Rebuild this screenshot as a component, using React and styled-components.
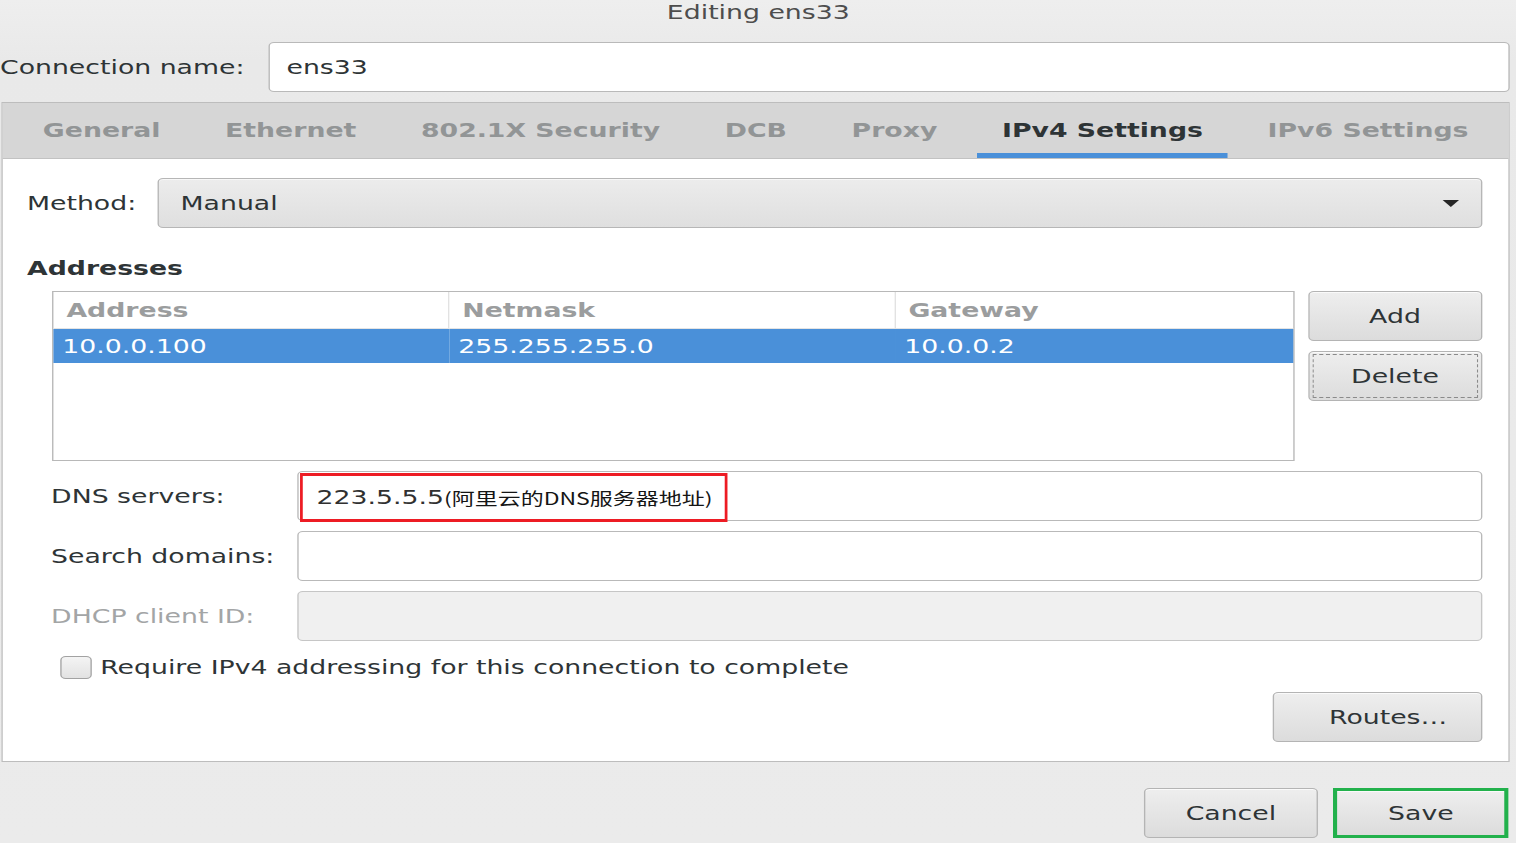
import React from 'react'
import styled, { createGlobalStyle } from 'styled-components'

// the shot is a GTK dialog stretched sideways, so everything is laid out
// in its own width and then widened as a whole
const STRETCH = 1.37
const WIDTH = 1107

const GlobalStyle = createGlobalStyle`
  html, body {
    margin: 0;
    padding: 0;
    width: 1516px;
    height: 843px;
    overflow: hidden;
    background: #ebebeb;
  }
`

const Dialog = styled.div`
  width: ${WIDTH}px;
  height: 843px;
  transform: scaleX(${STRETCH});
  transform-origin: 0 0;
  display: flex;
  flex-direction: column;
  background: linear-gradient(#eeeeee, #e9e9e9 60px, #ebebeb);
  font-family: "DejaVu Sans", "Noto Sans", sans-serif;
  font-size: 19.5px;
  color: #2e3436;
`

const TitleBar = styled.div`
  height: 42px;
  line-height: 26px;
  text-align: center;
  color: #4d4d4d;
`

const NameRow = styled.div`
  display: flex;
  align-items: center;
  height: 50px;
  margin: 0 5.5px 0 0;
`

const NameLabel = styled.div`
  flex: 0 0 195.6px;
`

const Entry = styled.div`
  flex: 1;
  display: flex;
  align-items: ${p => (p.stretch ? 'stretch' : 'center')};
  height: 50px;
  box-sizing: border-box;
  padding-left: ${p => (p.pad ? p.pad : 0)}px;
  border: 1px solid ${p => (p.disabled ? '#c6c6c6' : '#b9b9b9')};
  border-radius: 4px;
  background: ${p => (p.disabled ? '#f0f0f0' : '#ffffff')};
  color: #2e3436;
`

const Notebook = styled.div`
  margin: 10px 5.5px 0 0.7px;
  border: 1px solid #bdbdbd;
  background: #ffffff;
  display: flex;
  flex-direction: column;
`

const TabBar = styled.div`
  display: flex;
  gap: 11.2px;
  height: 56px;
  box-sizing: border-box;
  padding-left: 11.6px;
  background: #d6d6d6;
  border-bottom: 1px solid #c2c2c2;
`

const Tab = styled.div`
  display: flex;
  align-items: center;
  padding: 0 18px;
  font-weight: bold;
  color: ${p => (p.active ? '#2e3436' : '#929596')};
  box-shadow: ${p => (p.active ? 'inset 0 -5px 0 #4a90d9' : 'none')};
`

const Page = styled.div`
  display: flex;
  flex-direction: column;
  padding: 19px;
`

const MethodRow = styled.div`
  display: flex;
  align-items: center;
  height: 50px;
`

const MethodLabel = styled.div`
  flex: 0 0 94.6px;
  margin-left: -1px;
  padding-right: 1px;
`

const Combo = styled.div`
  flex: 1;
  height: 50px;
  box-sizing: border-box;
  display: flex;
  align-items: center;
  justify-content: space-between;
  padding: 0 16px 0 15.5px;
  border: 1px solid #b6b6b6;
  border-radius: 4px;
  background: linear-gradient(#ececec, #dfdfdf);
  box-shadow: inset 0 1px #f8f8f8;
`

const Arrow = styled.span`
  width: 0;
  height: 0;
  border-left: 6px solid transparent;
  border-right: 6px solid transparent;
  border-top: 7px solid #262626;
  margin-top: 1px;
`

const SectionTitle = styled.div`
  margin-top: 29px;
  margin-left: -1px;
  line-height: 24px;
  font-weight: bold;
`

const AddressBlock = styled.div`
  display: flex;
  gap: 10px;
  margin-top: 10px;
  padding-left: 17.3px;
`

const Table = styled.div`
  flex: 1;
  height: 170px;
  box-sizing: border-box;
  border: 1px solid #b8b8b8;
  background: #ffffff;
  display: grid;
  grid-template-columns: 289px 325.6px 1fr;
  grid-template-rows: 37px 34px;
  align-content: start;
`

const HeadCell = styled.div`
  display: flex;
  align-items: center;
  padding-left: 9.5px;
  font-weight: bold;
  color: #9b9d9e;
  border-right: ${p => (p.last ? 'none' : '1px solid #e2e2e2')};
  border-bottom: 1px solid #e4e4e4;
`

const Cell = styled.div`
  display: flex;
  align-items: center;
  padding-left: 6.5px;
  background: #4a90d9;
  color: #ffffff;
`

const ButtonColumn = styled.div`
  flex: 0 0 126.5px;
  display: flex;
  flex-direction: column;
  gap: 10px;
`

const Button = styled.div`
  height: 50px;
  width: ${p => (p.width ? `${p.width}px` : 'auto')};
  box-sizing: border-box;
  display: flex;
  align-items: center;
  justify-content: center;
  padding-left: ${p => (p.shift ? p.shift : 0)}px;
  border: ${p => (p.marked ? '3px solid #22b14c' : '1px solid #b4b4b4')};
  border-radius: ${p => (p.marked ? '0' : '4px')};
  background: linear-gradient(#eeeeee, #dcdcdc);
  box-shadow: inset 0 1px #fafafa;
  color: #2e3436;
  outline: ${p => (p.focused ? '1px dashed #8a8a8a' : 'none')};
  outline-offset: -4px;
`

const FormGrid = styled.div`
  display: grid;
  grid-template-columns: 179.5px 1fr;
  grid-auto-rows: 50px;
  row-gap: 10px;
  margin-top: 10px;
  padding-left: 17.3px;
`

const FieldLabel = styled.div`
  display: flex;
  align-items: center;
  margin-left: -0.7px;
  color: ${p => (p.disabled ? '#a3a5a6' : '#2e3436')};
`

const Highlight = styled.div`
  width: 312.4px;
  box-sizing: border-box;
  margin: 1px 0 -2px 0.5px;
  padding-left: 10px;
  display: flex;
  align-items: center;
  border-style: solid;
  border-color: #ed1c24;
  border-width: 3px 2.2px;
  color: #303030;
`

const Note = styled.span`
  font-family: "Noto Sans CJK SC", sans-serif;
  font-size: 16.8px;
  color: #151515;
`

const CheckRow = styled.div`
  display: flex;
  align-items: center;
  height: 24px;
  margin-top: 14px;
  padding-left: 23.1px;
`

const CheckBox = styled.span`
  width: 23.4px;
  height: 23px;
  box-sizing: border-box;
  border: 1px solid #a2a2a2;
  border-radius: 4px;
  background: linear-gradient(#f4f4f4, #e2e2e2);
  margin-right: 6px;
`

const RoutesRow = styled.div`
  display: flex;
  justify-content: flex-end;
  margin-top: 13px;
`

const Footer = styled.div`
  display: flex;
  justify-content: flex-end;
  gap: 11px;
  padding: 26px 6px 0 0;
`

const tabs = [
  'General',
  'Ethernet',
  '802.1X Security',
  'DCB',
  'Proxy',
  'IPv4 Settings',
  'IPv6 Settings',
]

const App = () => (
  <>
    <GlobalStyle />
    <Dialog>
      <TitleBar>Editing ens33</TitleBar>
      <NameRow>
        <NameLabel>Connection name:</NameLabel>
        <Entry pad={12.5}>ens33</Entry>
      </NameRow>

      <Notebook>
        <TabBar>
          {tabs.map(t => (
            <Tab key={t} active={t === 'IPv4 Settings'}>{t}</Tab>
          ))}
        </TabBar>

        <Page>
          <MethodRow>
            <MethodLabel>Method:</MethodLabel>
            <Combo>
              <span>Manual</span>
              <Arrow />
            </Combo>
          </MethodRow>

          <SectionTitle>Addresses</SectionTitle>
          <AddressBlock>
            <Table>
              <HeadCell>Address</HeadCell>
              <HeadCell>Netmask</HeadCell>
              <HeadCell last>Gateway</HeadCell>
              <Cell>10.0.0.100</Cell>
              <Cell>255.255.255.0</Cell>
              <Cell>10.0.0.2</Cell>
            </Table>
            <ButtonColumn>
              <Button>Add</Button>
              <Button focused>Delete</Button>
            </ButtonColumn>
          </AddressBlock>

          <FormGrid>
            <FieldLabel>DNS servers:</FieldLabel>
            <Entry stretch>
              <Highlight>
                223.5.5.5<Note>(阿里云的DNS服务器地址)</Note>
              </Highlight>
            </Entry>
            <FieldLabel>Search domains:</FieldLabel>
            <Entry />
            <FieldLabel disabled>DHCP client ID:</FieldLabel>
            <Entry disabled />
          </FormGrid>

          <CheckRow>
            <CheckBox />
            Require IPv4 addressing for this connection to complete
          </CheckRow>

          <RoutesRow>
            <Button width={152.5} shift={16}>Routes…</Button>
          </RoutesRow>
        </Page>
      </Notebook>

      <Footer>
        <Button width={127.7}>Cancel</Button>
        <Button width={127.7} marked>Save</Button>
      </Footer>
    </Dialog>
  </>
)

export default App
